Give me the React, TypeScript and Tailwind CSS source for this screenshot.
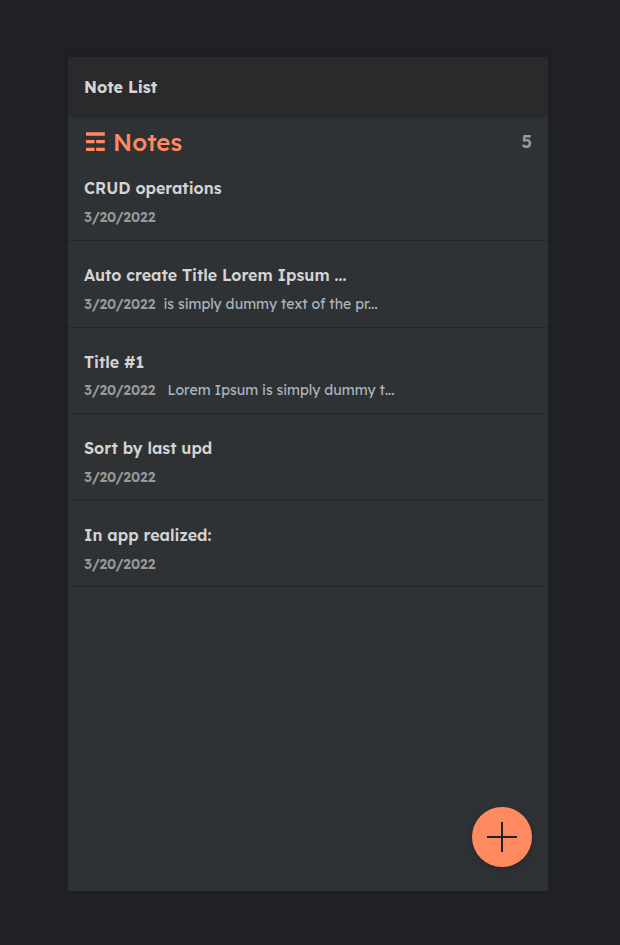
type Note = { title: string; date: string; text?: string; gap?: string };

const notes: Note[] = [
  { title: 'CRUD operations', date: '3/20/2022' },
  { title: 'Auto create Title Lorem Ipsum ...', date: '3/20/2022', text: 'is simply dummy text of the pr...', gap: 'ml-2' },
  { title: 'Title #1', date: '3/20/2022', text: 'Lorem Ipsum is simply dummy t...', gap: 'ml-3' },
  { title: 'Sort by last upd', date: '3/20/2022' },
  { title: 'In app realized:', date: '3/20/2022' },
];

function ListIcon() {
  return (
    <svg width="21" height="19" viewBox="0 0 21 19" fill="currentColor" aria-hidden="true">
      <path d="M2 .3h18.8v3.5H2zM2 8h8.6v3.3H2zM12.2 8h8.6v3.3h-8.6zM2 15.7h8.6V19H2zM12.2 15.7h8.6V19h-8.6z" />
    </svg>
  );
}

export default function App() {
  return (
    <div className="flex h-[945px] w-[620px] flex-col bg-[#202124] pt-[57px] pl-[68px] font-['Lexend','Inter',sans-serif] text-[#d6d3d3]">
      <main className="flex h-[834px] w-[480px] flex-col bg-[#2e3235] shadow-[0_0_8px_rgba(0,0,0,0.1)]">
        <header className="flex h-[61px] shrink-0 items-center bg-[#292a2c] px-4 pb-px">
          <h1 className="text-base font-bold">Note List</h1>
        </header>
        <div className="flex h-[36.4px] shrink-0 items-start justify-between px-4 pt-[11px]">
          <h2 className="flex items-start text-2xl leading-[26px] font-[550] text-[#ff8a5f]">
            <span className="mt-[3px]"><ListIcon /></span>
            <span className="ml-2">Notes</span>
          </h2>
          <p className="text-lg leading-[26px] font-semibold text-[#999999]">5</p>
        </div>
        <ul>
          {notes.map((n) => (
            <li key={n.title} className="h-[86.6px] border-b border-[#25272a] px-4 pt-[22px]">
              <h3 className="text-base font-semibold">{n.title}</h3>
              <p className="mt-[6.85px] flex text-sm leading-5">
                <span className="font-semibold text-[#999999]">{n.date}</span>
                {n.text && <span className={`${n.gap} font-normal text-[#a9b5bf]`}>{n.text}</span>}
              </p>
            </li>
          ))}
        </ul>
        <button
          aria-label="Add note"
          className="mt-auto mr-4 mb-6 flex size-[60px] items-center justify-center self-end rounded-full bg-[#ff8a5f] shadow-[0_2px_8px_rgba(0,0,0,0.2)]"
        >
          <svg width="30" height="30" viewBox="0 0 30 30" fill="none" stroke="#202124" strokeWidth="2">
            <path d="M15 0v30M0 15h30" />
          </svg>
        </button>
      </main>
    </div>
  );
}
